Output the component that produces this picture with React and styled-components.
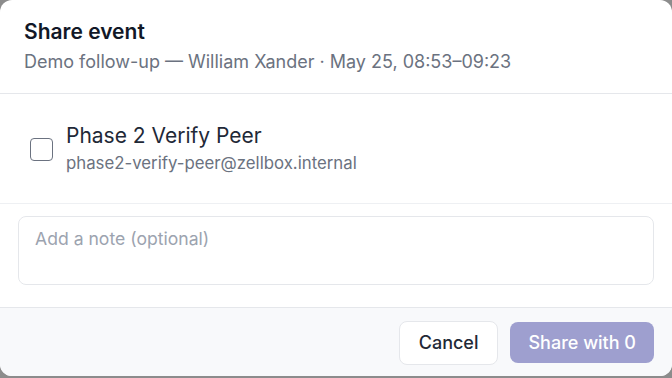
import React from "react";
import styled, { createGlobalStyle } from "styled-components";

const Global = createGlobalStyle`
  html, body {
    margin: 0;
    padding: 0;
    background: #8c8c8c;
    font-family: Inter, "Noto Sans", "Liberation Sans", sans-serif;
  }
  * { box-sizing: border-box; }
`;

const Dialog = styled.div`
  width: 672px;
  height: 376px;
  background: #fff;
  border-radius: 12px;
  overflow: hidden;
  display: flex;
  flex-direction: column;
`;

const Header = styled.div`
  padding: 19px 24px 19px;
  border-bottom: 1px solid #e5e7eb;
`;

const Title = styled.h2`
  margin: 0;
  font-size: 21px;
  line-height: 26px;
  font-weight: 600;
  color: #111827;
`;

const Subtitle = styled.div`
  margin-top: 5px;
  font-size: 18px;
  line-height: 24px;
  color: #6b7280;
`;

const Meta = styled.span`
  margin-left: 5px;
`;

const Recipient = styled.label`
  display: flex;
  align-items: center;
  gap: 13px;
  padding: 28px 30px 29px;
  border-bottom: 1px solid #eef0f3;
`;

const Box = styled.span`
  width: 23px;
  height: 23px;
  margin-top: 2px;
  border: 1.5px solid #6b7280;
  border-radius: 4px;
  flex-shrink: 0;
`;

const Who = styled.div`
  display: flex;
  flex-direction: column;
  gap: 2px;
`;

const Name = styled.span`
  font-size: 21px;
  line-height: 28px;
  color: #1f2937;
`;

const Email = styled.span`
  font-size: 16.8px;
  line-height: 22px;
  color: #6b7280;
`;

const NoteWrap = styled.div`
  padding: 12px 18px 22px;
  border-bottom: 1px solid #e5e7eb;
`;

const Note = styled.textarea`
  display: block;
  width: 100%;
  height: 69px;
  resize: none;
  border: 1px solid #e5e7eb;
  border-radius: 8px;
  padding: 11px 16px;
  font-family: inherit;
  font-size: 17.6px;
  line-height: 22px;
  color: #111827;
  outline: none;
  &::placeholder { color: #9ca3af; }
`;

const Footer = styled.div`
  flex: 1;
  background: #f8f9fb;
  display: flex;
  justify-content: flex-end;
  align-items: center;
  gap: 12px;
  padding: 1px 18px 0;
`;

const Button = styled.button`
  height: ${(p) => (p.primary ? "41px" : "44px")};
  padding: 0 ${(p) => (p.primary ? "18px" : "19px")};
  border-radius: 8px;
  font-family: inherit;
  font-size: 18px;
  font-weight: 500;
  border: ${(p) => (p.primary ? "none" : "1px solid #e5e7eb")};
  background: ${(p) => (p.primary ? "#9e9fcf" : "#fff")};
  color: ${(p) => (p.primary ? "#fff" : "#1f2937")};
  cursor: ${(p) => (p.primary ? "not-allowed" : "pointer")};
`;

export default function App() {
  return (
    <>
      <Global />
      <Dialog>
        <Header>
          <Title>Share event</Title>
          <Subtitle>
            Demo follow-up — William Xander<Meta>· May 25, 08:53–09:23</Meta>
          </Subtitle>
        </Header>
        <Recipient>
          <Box />
          <Who>
            <Name>Phase 2 Verify Peer</Name>
            <Email>phase2-verify-peer@zellbox.internal</Email>
          </Who>
        </Recipient>
        <NoteWrap>
          <Note placeholder="Add a note (optional)" />
        </NoteWrap>
        <Footer>
          <Button>Cancel</Button>
          <Button primary disabled>Share with 0</Button>
        </Footer>
      </Dialog>
    </>
  );
}
